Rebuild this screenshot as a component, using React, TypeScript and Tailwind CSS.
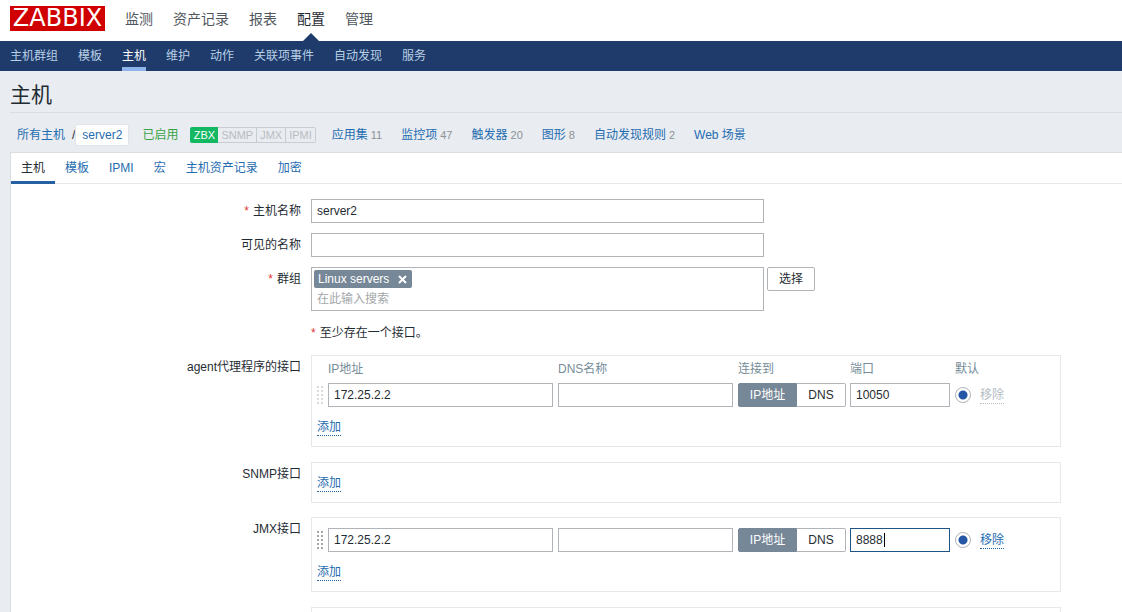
import { useState } from "react";
import clsx from "clsx";

const mainMenu = ["监测", "资产记录", "报表", "配置", "管理"];
const subMenu = ["主机群组", "模板", "主机", "维护", "动作", "关联项事件", "自动发现", "服务"];
const tabs = ["主机", "模板", "IPMI", "宏", "主机资产记录", "加密"];

const hostLinks = [
  { label: "应用集", count: 11 },
  { label: "监控项", count: 47 },
  { label: "触发器", count: 20 },
  { label: "图形", count: 8 },
  { label: "自动发现规则", count: 2 },
  { label: "Web 场景" },
];

const inputClass =
  "block h-6 border border-[#b0b3b8] bg-white px-[5px] text-[12px] leading-[22px] text-[#1f2c33] outline-none focus:border-[#1f5584]";

function Label({ children, htmlFor, required }: { children: React.ReactNode; htmlFor?: string; required?: boolean }) {
  return (
    <label htmlFor={htmlFor} className="pt-[3px] text-right">
      {required && <Star />}
      {children}
    </label>
  );
}

function Star() {
  return <span className="mr-1 text-[#e33734]">*</span>;
}

function AddButton() {
  return (
    <button type="button" className="block h-[18px] border-b border-dotted border-[#1f65a6] leading-[18px] text-[#1f6cb0]">
      添加
    </button>
  );
}

function DragHandle({ disabled }: { disabled?: boolean }) {
  return (
    <svg width="6" height="20" viewBox="0 0 6 20" className={disabled ? "text-[#d8dadc]" : "text-[#a3a7aa]"} fill="currentColor">
      {[1, 5, 9, 13, 17].map((y) => (
        <g key={y}>
          <rect x="0" y={y} width="2" height="2" />
          <rect x="4" y={y} width="2" height="2" />
        </g>
      ))}
    </svg>
  );
}

interface InterfaceProps {
  name: string;
  ip: string;
  defaultPort: string;
  header?: boolean;
  locked?: boolean;
  focused?: boolean;
}

function InterfaceTable({ name, ip, defaultPort, header, locked, focused }: InterfaceProps) {
  const [port, setPort] = useState(defaultPort);
  const [connect, setConnect] = useState("IP地址");

  return (
    <table className="w-full table-fixed text-left">
      <colgroup>
        <col className="w-[11px]" />
        <col className="w-[230px]" />
        <col className="w-[180px]" />
        <col className="w-[112px]" />
        <col className="w-[105px]" />
        <col className="w-[25px]" />
        <col />
      </colgroup>
      {header && (
        <thead className="text-[#768d99]">
          <tr className="h-[23px] align-top whitespace-nowrap">
            <td />
            <th className="font-normal">IP地址</th>
            <th className="font-normal">DNS名称</th>
            <th className="font-normal">连接到</th>
            <th className="font-normal">端口</th>
            <th className="font-normal" colSpan={2}>默认</th>
          </tr>
        </thead>
      )}
      <tbody>
        <tr>
          <td>
            <DragHandle disabled={locked} />
          </td>
          <td>
            <input aria-label="IP地址" defaultValue={ip} className={clsx(inputClass, "w-[225px]")} />
          </td>
          <td>
            <input aria-label="DNS名称" className={clsx(inputClass, "w-[175px]")} />
          </td>
          <td>
            <div className="flex w-[108px]">
              {["IP地址", "DNS"].map((option) => (
                <button
                  key={option}
                  type="button"
                  onClick={() => setConnect(option)}
                  className={clsx(
                    "h-6 border text-center leading-[22px] first:w-[59px] first:rounded-l-xs last:w-[49px] last:rounded-r-xs last:border-l-0",
                    connect === option ? "border-[#768797] bg-[#768797] text-white" : "border-[#b0b3b8] bg-white"
                  )}
                >
                  {option}
                </button>
              ))}
            </div>
          </td>
          <td>
            <div className="relative w-[100px]">
              <input
                aria-label="端口"
                value={port}
                onChange={(e) => setPort(e.target.value)}
                autoFocus={focused}
                className={clsx(inputClass, "w-full", focused && "caret-transparent")}
              />
              {focused && <span className="absolute top-[5px] left-[34px] h-[14px] w-px bg-black" />}
            </div>
          </td>
          <td>
            <input
              type="radio"
              name={name}
              aria-label="默认"
              defaultChecked
              className="block size-4 appearance-none rounded-full border border-[#b0b3b8] bg-white bg-[radial-gradient(circle,#2456a6_4px,transparent_5px)]"
            />
          </td>
          <td>
            <button
              type="button"
              disabled={locked}
              className={clsx(
                "block h-[18px] border-b border-dotted leading-[18px]",
                locked ? "border-[#b4bcc4] text-[#b4bcc4]" : "border-[#1f65a6] text-[#1f6cb0]"
              )}
            >
              移除
            </button>
          </td>
        </tr>
      </tbody>
    </table>
  );
}

const boxClass = "w-[750px] border border-[#e6e8ea] px-[5px]";

export default function App() {
  return (
    <div className="min-h-screen bg-[#e9ecf1] font-['Liberation_Sans','Noto_Sans_CJK_SC',sans-serif] text-[12px] leading-[18px] text-[#1f2c33]">
      <header>
        <div className="flex h-[41px] items-start bg-white pl-[10px]">
          <a
            href="#"
            className="mt-[6px] flex h-[25px] w-[95px] items-center justify-center bg-[#d10000] font-['DejaVu_Sans',sans-serif] text-[24px] leading-[27px] text-white"
          >
            ZABBIX
          </a>
          <nav className="ml-5 flex h-full gap-5 text-[14px] leading-[38px] text-[#50575e]">
            {mainMenu.map((item) => (
              <a key={item} href="#" className={clsx("relative", item === "配置" && "text-[#1f2c33]")}>
                {item}
                {item === "配置" && (
                  <svg className="absolute bottom-0 left-1/2 -translate-x-1/2" width="16" height="8" viewBox="0 0 16 8">
                    <path d="M0 8 8 0l8 8z" fill="#1e3b6c" />
                  </svg>
                )}
              </a>
            ))}
          </nav>
        </div>
        <nav className="flex h-[30px] gap-5 bg-[#1e3b6c] pl-[10px] leading-[30px] text-[#b9d0e4]">
          {subMenu.map((item) => (
            <a key={item} href="#" className={clsx("h-full", item === "主机" && "border-b-4 border-[#8fb4ea] text-white")}>
              {item}
            </a>
          ))}
        </nav>
      </header>

      <main className="pl-[10px]">
        <h1 className="h-[42px] border-b border-[#dadee3] text-[21px] leading-[47px]">主机</h1>

        <div className="flex h-[39px] items-center pt-1 pl-[7px] whitespace-nowrap">
          <a href="#" className="text-[#1f6cb0]">所有主机</a>
          <span className="ml-[7px]">/</span>
          <a href="#" className="rounded-xs border border-[#e0e3e7] bg-white px-[6px] leading-5 text-[#1f6cb0]">server2</a>
          <span className="ml-[13px] text-[#36a446]">已启用</span>
          <div className="ml-3 flex h-4 text-[11px] leading-4 text-[#b9bdc1]">
            <span className="w-7 rounded-l-xs bg-[#12b862] text-center text-white">ZBX</span>
            {["SNMP", "JMX", "IPMI"].map((type) => (
              <span key={type} className="border-y border-r border-[#c9cdd1] px-[3px] leading-[14px] last:rounded-r-xs">
                {type}
              </span>
            ))}
          </div>
          <nav className="ml-4 flex gap-[19px]">
            {hostLinks.map((link) => (
              <span key={link.label}>
                <a href="#" className="text-[#1f6cb0]">{link.label}</a>
                {link.count && <span className="ml-[3px] text-[11px] text-[#8b9298]">{link.count}</span>}
              </span>
            ))}
          </nav>
        </div>

        <div className="border-t border-l border-[#dadee3] bg-white">
          <nav className="flex h-[31px] border-b border-[#e6e8ea] leading-[30px]">
            {tabs.map((tab, i) => (
              <a
                key={tab}
                href="#"
                className={clsx("h-[31px] px-[10px]", i === 0 ? "border-b-3 border-[#2560a0]" : "text-[#1f6cb0]")}
              >
                {tab}
              </a>
            ))}
          </nav>

          <form className="grid grid-cols-[290px_1fr] gap-x-[10px] pt-[15px]">
            <Label htmlFor="host" required>主机名称</Label>
            <div className="mb-[10px]">
              <input id="host" defaultValue="server2" className={clsx(inputClass, "w-[453px]")} />
            </div>

            <Label htmlFor="visible">可见的名称</Label>
            <div className="mb-[10px]">
              <input id="visible" className={clsx(inputClass, "w-[453px]")} />
            </div>

            <Label htmlFor="groups" required>群组</Label>
            <div className="mb-[10px] flex items-start gap-[3px]">
              <div className="h-11 w-[453px] border border-[#b0b3b8] p-[2px]">
                <span className="flex h-[18px] w-[98px] items-center justify-between rounded-xs bg-[#768797] px-1 text-white">
                  Linux servers
                  <button type="button" aria-label="移除 Linux servers" className="pr-px">
                    <svg width="9" height="9" viewBox="0 0 9 9" stroke="currentColor" strokeWidth="2">
                      <path d="M1 1l7 7M8 1L1 8" />
                    </svg>
                  </button>
                </span>
                <input
                  id="groups"
                  placeholder="在此输入搜索"
                  className="block h-[22px] w-full px-[3px] leading-[22px] outline-none placeholder:text-[#a3a7aa]"
                />
              </div>
              <button type="button" className="h-6 w-12 rounded-xs border border-[#b0b3b8] leading-[22px]">
                选择
              </button>
            </div>

            <div className="col-start-2 mb-[10px] py-[3px]">
              <Star />
              至少存在一个接口。
            </div>

            <Label>agent代理程序的接口</Label>
            <div className={clsx(boxClass, "mb-[15px] h-[92px] pt-1")}>
              <InterfaceTable name="agent" ip="172.25.2.2" defaultPort="10050" header locked />
              <div className="mt-[11px]">
                <AddButton />
              </div>
            </div>

            <Label>SNMP接口</Label>
            <div className={clsx(boxClass, "mb-[14px] h-[41px] pt-[11px]")}>
              <AddButton />
            </div>

            <Label>JMX接口</Label>
            <div className={clsx(boxClass, "mb-[15px] h-[75px] pt-[10px]")}>
              <InterfaceTable name="jmx" ip="172.25.2.2" defaultPort="8888" focused />
              <div className="mt-[11px]">
                <AddButton />
              </div>
            </div>

            <div className={clsx(boxClass, "col-start-2 h-[41px]")} />
          </form>
        </div>
      </main>
    </div>
  );
}
